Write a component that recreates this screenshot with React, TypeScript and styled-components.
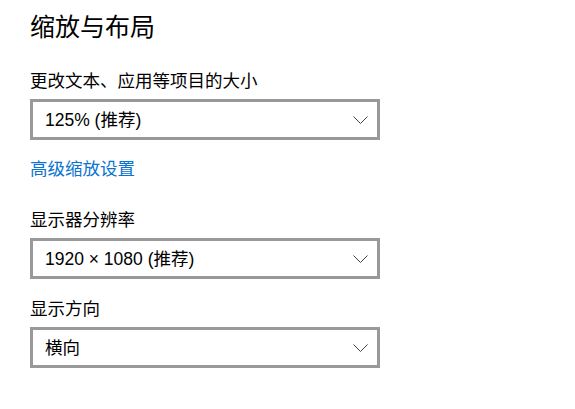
import React from "react";
import styled, { createGlobalStyle } from "styled-components";

const GlobalStyle = createGlobalStyle`
  html, body {
    margin: 0;
    padding: 0;
    background: #fff;
  }
  body {
    font-family: "Noto Sans CJK SC", "Noto Sans", sans-serif;
    color: #000;
  }
`;

const Page = styled.div`
  display: flex;
  flex-direction: column;
  align-items: flex-start;
  padding: 8px 30px 0;
  width: 575px;
  height: 409px;
  box-sizing: border-box;
`;

const Title = styled.h1`
  margin: 0;
  font-size: 25px;
  font-weight: 400;
  line-height: 34px;
`;

const Field = styled.div<{ $top: number }>`
  display: flex;
  flex-direction: column;
  gap: 7px;
  margin-top: ${(p) => p.$top}px;
`;

const Label = styled.div`
  font-size: 17.5px;
  line-height: 24px;
`;

const Select = styled.div`
  display: flex;
  align-items: center;
  justify-content: space-between;
  width: 350px;
  height: 41px;
  box-sizing: border-box;
  border: 3px solid #999;
  padding: 0 9px 0 12px;
  font-size: 17.5px;
  background: #fff;
`;

const Value = styled.span`
  font-family: "Liberation Sans", "Noto Sans CJK SC", sans-serif;
  line-height: 24px;
`;

const Link = styled.a`
  margin-top: 16px;
  font-size: 17.5px;
  line-height: 24px;
  color: #0a74d0;
  text-decoration: none;
  cursor: pointer;
`;

const Chevron = () => (
  <svg width="15" height="8" viewBox="0 0 15 8">
    <path d="M0.5 0.5 L7.5 7.5 L14.5 0.5" fill="none" stroke="#444" strokeWidth="1" />
  </svg>
);

const Dropdown: React.FC<{ value: string }> = ({ value }) => (
  <Select>
    <Value>{value}</Value>
    <Chevron />
  </Select>
);

export default function App() {
  return (
    <>
      <GlobalStyle />
      <Page>
        <Title>缩放与布局</Title>
        <Field $top={26}>
          <Label>更改文本、应用等项目的大小</Label>
          <Dropdown value="125% (推荐)" />
        </Field>
        <Link>高级缩放设置</Link>
        <Field $top={27}>
          <Label>显示器分辨率</Label>
          <Dropdown value="1920 × 1080 (推荐)" />
        </Field>
        <Field $top={17}>
          <Label>显示方向</Label>
          <Dropdown value="横向" />
        </Field>
      </Page>
    </>
  );
}
